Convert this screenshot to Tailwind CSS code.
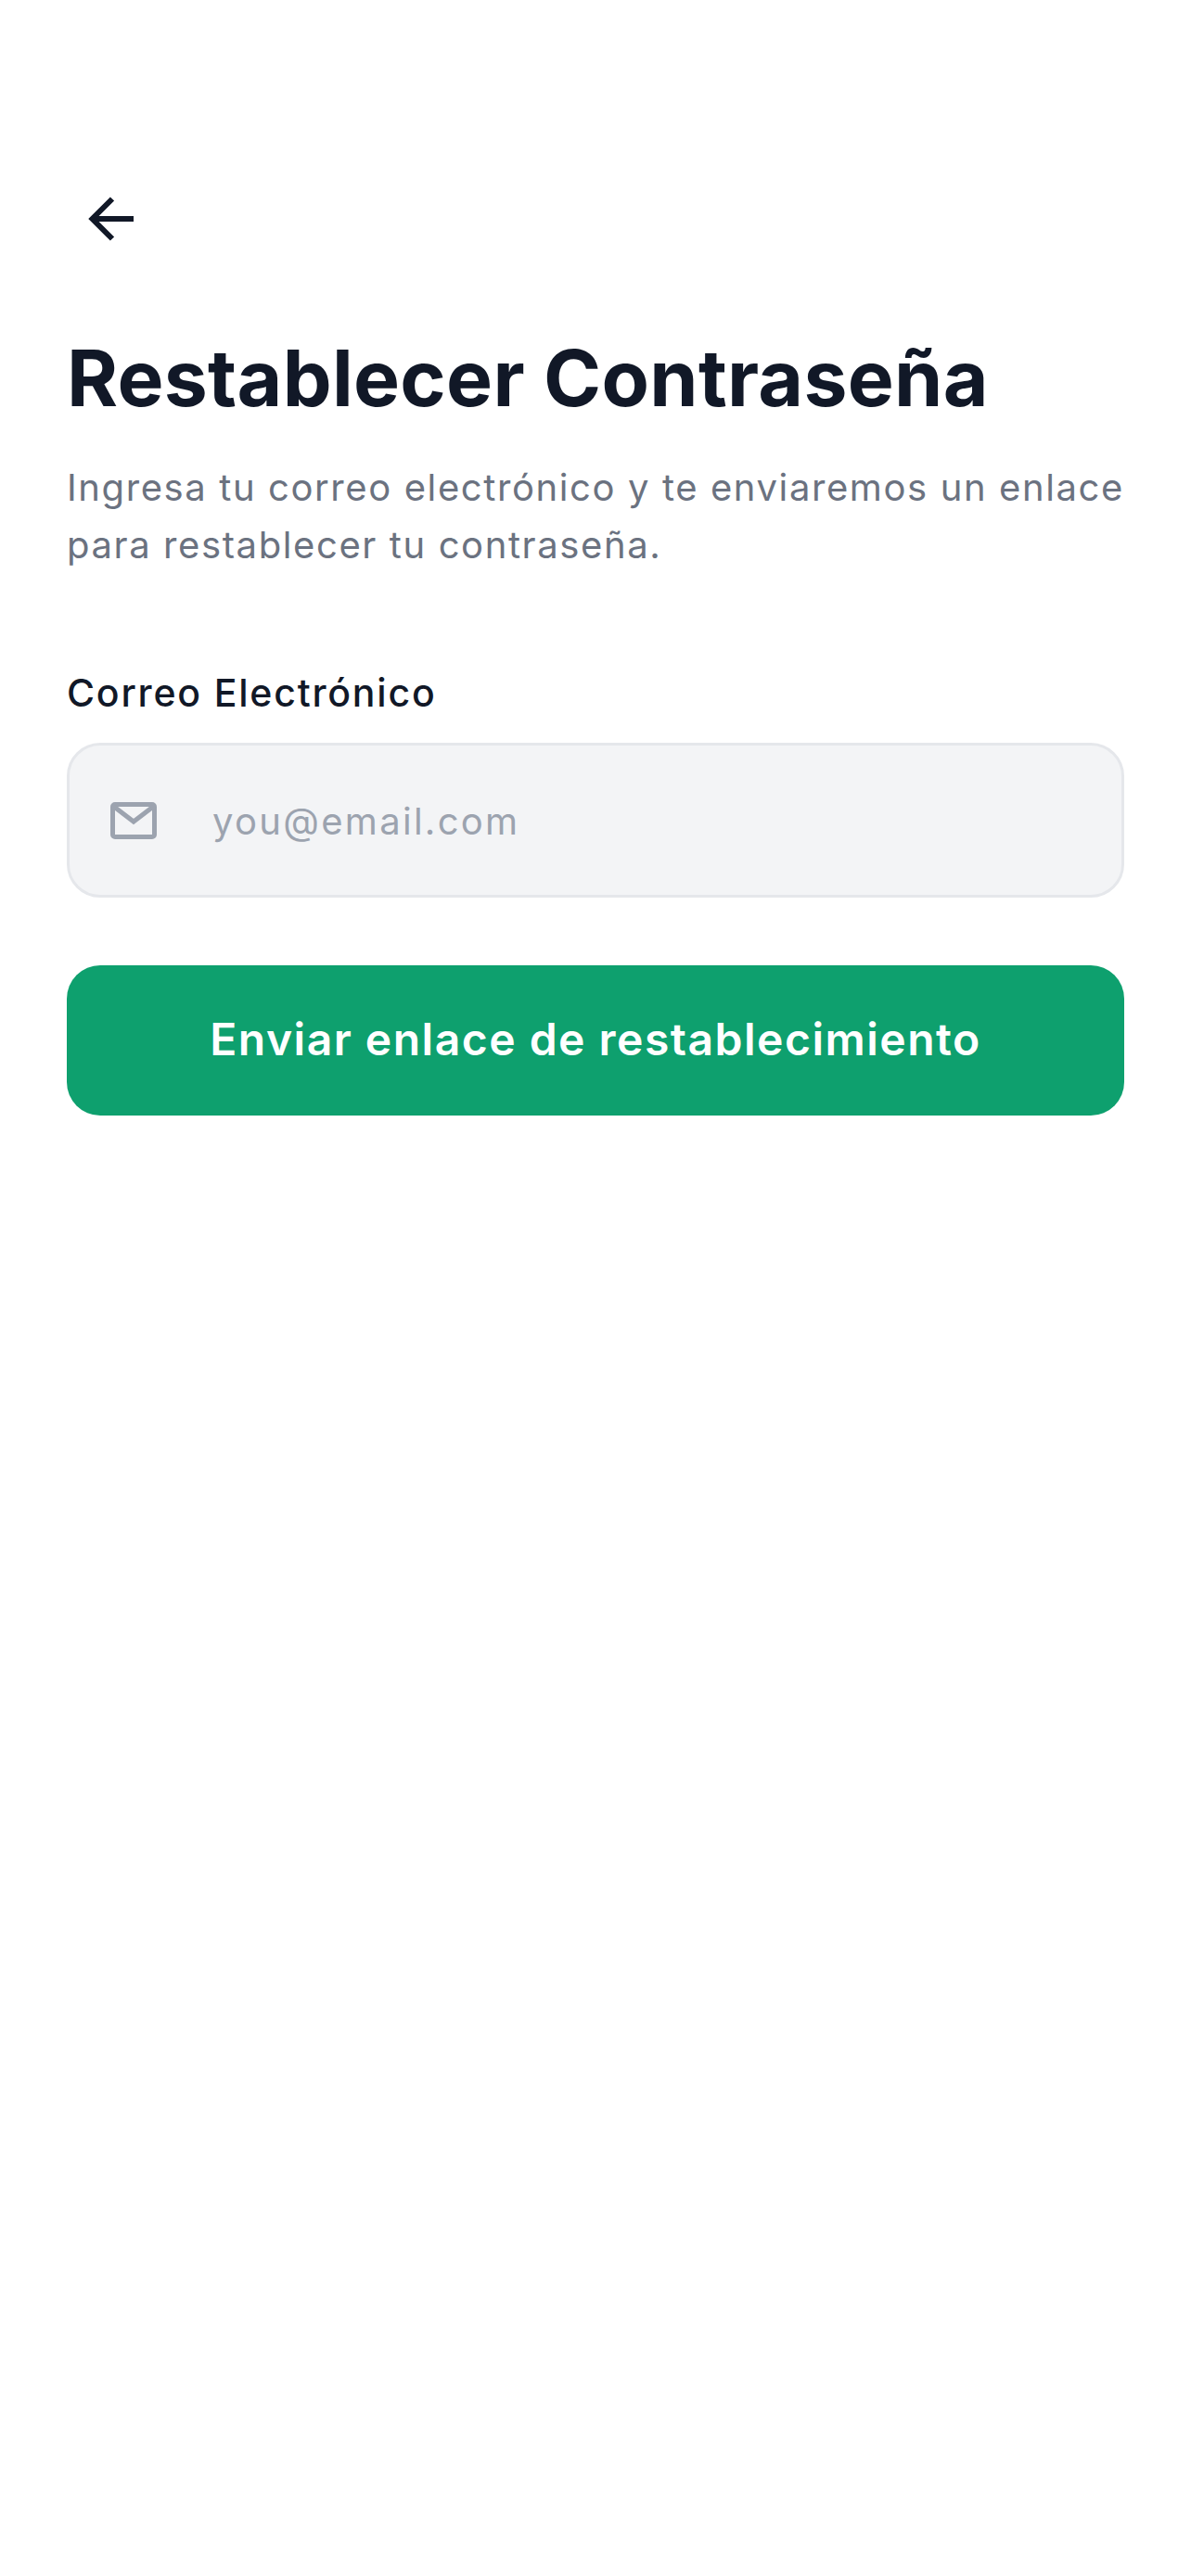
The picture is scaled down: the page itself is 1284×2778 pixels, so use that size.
<!DOCTYPE html>
<html><head><script src="https://cdn.jsdelivr.net/npm/@tailwindcss/browser@4"></script></head>
<body class="bg-white font-['Inter',sans-serif]">
<div class="w-[1284px] h-[2778px] px-[72px] pt-[188px] bg-white">
  <button class="w-[96px] h-[96px] flex items-center justify-center">
    <svg class="w-[60px] h-[60px]" viewBox="0 0 60 60" fill="none" stroke="#111827" stroke-width="6"><path d="M54 30H10"/><path d="M31 8.5L9.5 30L31 51.5"/></svg>
  </button>
  <h1 class="mt-[74px] text-[84px] leading-[100px] font-bold tracking-[0.3px] text-[#111827]">Restablecer Contraseña</h1>
  <p class="mt-[37px] text-[40px] leading-[62px] tracking-[1.6px] text-[#6b7280]">Ingresa tu correo electrónico y te enviaremos un enlace para restablecer tu contraseña.</p>
  <label class="block mt-[100px] text-[41px] leading-[56px] font-medium tracking-[1.8px] text-[#111827]">Correo Electrónico</label>
  <div class="mt-[26px] h-[167px] rounded-[36px] border-[3px] border-[#e5e7eb] bg-[#f3f4f6] flex items-center pl-[44px]">
    <svg class="w-[50px] h-[40px]" viewBox="0 0 50 40" fill="none" stroke="#9ca3af" stroke-width="5"><rect x="2.5" y="2.5" width="45" height="35" rx="2.5"/><path d="M4 5L25 21L46 5"/></svg>
    <span class="ml-[60px] pt-[2px] text-[40px] tracking-[2.3px] text-[#9ca3af]">you@email.com</span>
  </div>
  <button class="mt-[73px] w-full h-[162px] pb-[2px] rounded-[36px] bg-[#0ea06e] text-white text-[48px] font-semibold tracking-[1.5px]">Enviar enlace de restablecimiento</button>
</div>
</body></html>
